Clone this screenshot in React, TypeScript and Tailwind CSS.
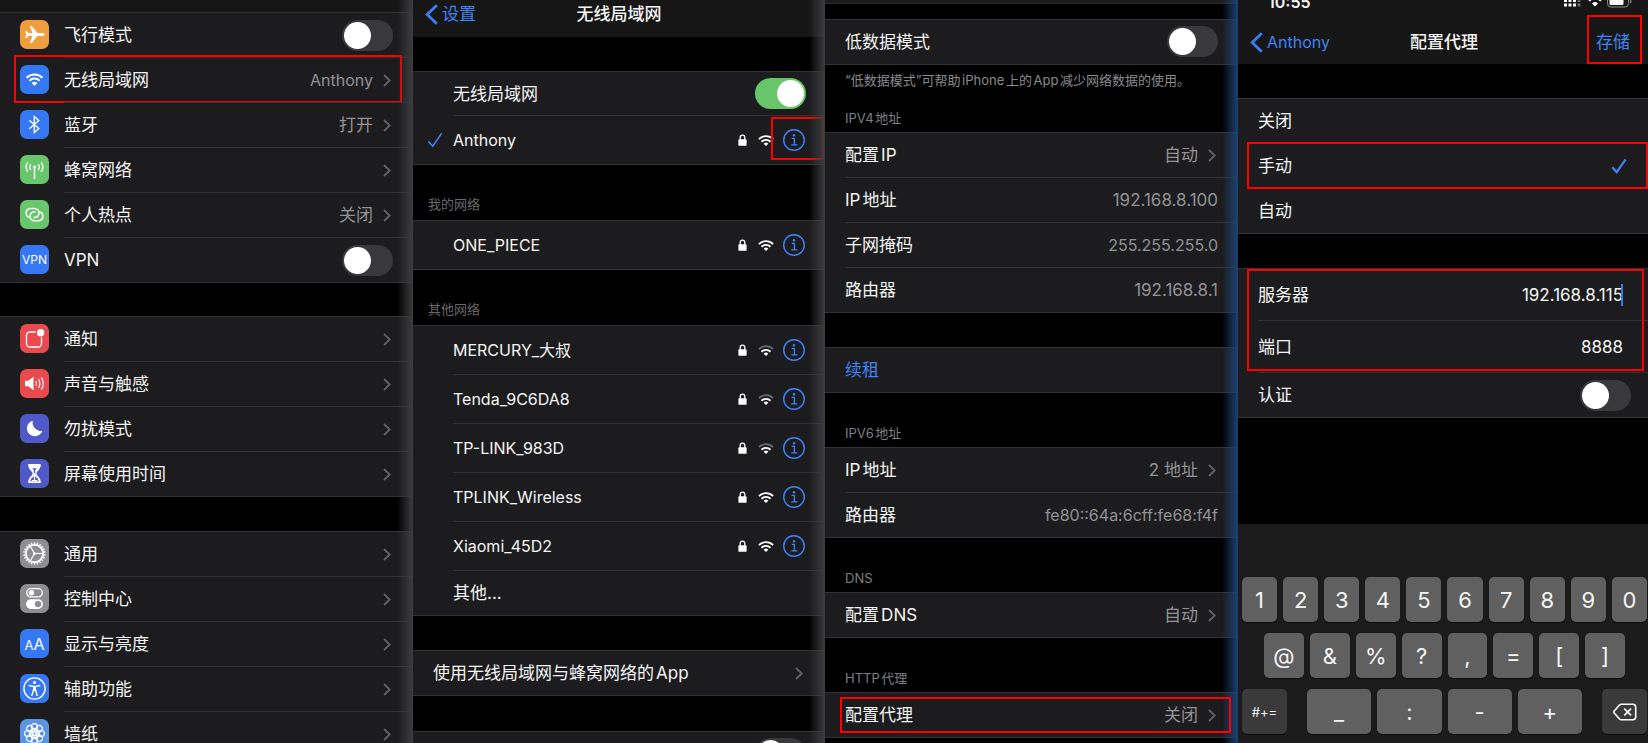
import React, { useState } from "react";

/* ---------- glyphs ---------- */

function Chevron() {
  return (
    <svg viewBox="0 0 8 13" className="h-[13px] w-2 shrink-0" fill="none" stroke="#626266" strokeWidth="1.8" aria-hidden="true">
      <path d="M1 1l5.7 5.5L1 12" />
    </svg>
  );
}

function BackArrow() {
  return (
    <svg viewBox="0 0 13 21" className="h-[21px] w-[13px] shrink-0" fill="none" stroke="#3b7ff7" strokeWidth="2.8" aria-hidden="true">
      <path d="M11.8 1.2L2.2 10.5l9.6 9.3" />
    </svg>
  );
}

function Lock() {
  return (
    <svg viewBox="0 0 9 12" className="h-3 w-[9px] shrink-0" aria-hidden="true">
      <path d="M2.2 6V3.4a2.3 2.3 0 0 1 4.6 0V6" fill="none" stroke="#fff" strokeWidth="1.3" />
      <rect x="0.4" y="5.3" width="8.2" height="6.5" rx="0.9" fill="#fff" />
    </svg>
  );
}

function Wifi({ weak = false }: { weak?: boolean }) {
  return (
    <svg viewBox="0 0 18 12.4" className="h-[11px] w-4 shrink-0" aria-hidden="true">
      <path d="M1 4.6a11.4 11.4 0 0 1 16 0" fill="none" stroke={weak ? "#6a6a6c" : "#fff"} strokeWidth="2" />
      <path d="M3.9 7.6a7.3 7.3 0 0 1 10.2 0" fill="none" stroke="#fff" strokeWidth="2" />
      <path d="M9 12.3L6.4 9.8a3.7 3.7 0 0 1 5.2 0z" fill="#fff" />
    </svg>
  );
}

function Info() {
  return (
    <svg viewBox="0 0 22 22" className="size-[22px]" fill="none" stroke="#3f83f8" strokeWidth="1.4" aria-hidden="true">
      <circle cx="11" cy="11" r="10.3" />
      <path d="M8.7 9.3h2.7v6.4M8.3 15.8h6" strokeWidth="1.3" />
      <circle cx="11" cy="6.2" r="1.2" fill="#3f83f8" stroke="none" />
    </svg>
  );
}

function Check({ bold = false }: { bold?: boolean }) {
  return (
    <svg viewBox="0 0 16 16" className="size-4 shrink-0" fill="none" stroke="#3f83f8" strokeWidth={bold ? 2.2 : 1.6} aria-hidden="true">
      <path d="M1.4 9.2l4.3 5L14.6 1.4" />
    </svg>
  );
}

const spokes = (n: number) => Array.from({ length: n }, (_, i) => (360 / n) * i);

const glyphs: Record<string, React.ReactNode> = {
  airplane: (
    <path
      fill="#fff"
      d="M24.7 14.5c0-.9-1.5-1.6-3.4-1.6h-3.9l-5-6.2c-.4-.5-.8-.7-1.3-.7H9.9l2.5 6.9H8.3L6.7 10.9H5.2l.9 3.6-.9 3.6h1.5l1.6-2h4.1L9.9 23h1.2c.5 0 .9-.2 1.3-.7l5-6.2h3.9c1.9 0 3.4-.7 3.4-1.6z"
    />
  ),
  wifi: (
    <g>
      <path d="M6.6 12.7a11.3 11.3 0 0 1 15.8 0M9.4 15.7a7.3 7.3 0 0 1 10.2 0" fill="none" stroke="#fff" strokeWidth="2" />
      <path d="M14.5 20.9l-2.9-2.8a4.1 4.1 0 0 1 5.8 0z" fill="#fff" />
    </g>
  ),
  bluetooth: <path d="M9.3 10.3l9.5 8.2-4.5 4V6.5l4.5 4-9.5 8.2" fill="none" stroke="#fff" strokeWidth="1.4" />,
  cellular: (
    <g fill="none" stroke="#fff" strokeWidth="1.3">
      <path d="M10.9 9.1a4.7 4.7 0 0 0 0 6M18.1 9.1a4.7 4.7 0 0 1 0 6M7.9 7.4a7.7 7.7 0 0 0 0 9.4M21.1 7.4a7.7 7.7 0 0 1 0 9.4" />
      <path d="M14.5 13v11" strokeWidth="1.5" />
      <circle cx="14.5" cy="12.1" r="1.7" fill="#fff" stroke="none" />
    </g>
  ),
  hotspot: (
    <g fill="none" stroke="#fff" strokeWidth="1.5">
      <path d="M10.4 17.4a4.5 4.5 0 0 1-.6-8.900h4.700a4.500 4.500 0 0 1 0 9h-1" />
      <path d="M18.600 11.800a4.500 4.500 0 0 1 .6 8.900h-4.700a4.500 4.500 0 0 1 0-9h1" />
    </g>
  ),
  notify: (
    <g>
      <rect x="6.5" y="8" width="15" height="15" rx="3.5" fill="none" stroke="#fff" strokeWidth="1.3" />
      <circle cx="20.6" cy="8.7" r="5" fill="#e84a4e" />
      <circle cx="20.6" cy="8.7" r="3.7" fill="#fff" />
    </g>
  ),
  sound: (
    <g>
      <path d="M5 11.7h3.3l5.2-3.9v13.4l-5.2-3.900H5z" fill="#fff" />
      <path d="M15.9 12.1q1.4 2.4 0 4.8M18.6 10.3q2.6 4.2 0 8.4M21.3 8.4q4 6.1 0 12.2" fill="none" stroke="#fff" strokeWidth="1.2" />
    </g>
  ),
  moon: <path d="M12.8 6.7a7.9 7.9 0 1 0 9.5 10.3A8.6 8.6 0 0 1 12.8 6.7z" fill="#fff" />,
  hourglass: (
    <g fill="#fff">
      <path d="M8.7 5h11.6q.7 0 .6.8l-.3 1.6c-.5 3-3.7 4.6-4.3 7.1.6 2.5 3.8 4.1 4.3 7.1l.3 1.6q.1.8-.6.8H8.7q-.7 0-.6-.8l.3-1.6c.5-3 3.7-4.6 4.3-7.1-.6-2.5-3.8-4.1-4.3-7.1l-.3-1.6Q8 5 8.7 5z" />
      <path d="M10.2 22.2q.7-3.4 3.6-4.7V11l-1.7-1.8h4.8L15.2 11v6.5q2.9 1.3 3.6 4.7z" fill="#5059c9" />
      <path d="M14.5 14v7M11.8 21.5h5.4" stroke="#fff" strokeWidth="1.2" />
    </g>
  ),
  gear: (
    <g fill="none" stroke="#fff">
      <circle cx="14.5" cy="14.5" r="8.6" strokeWidth="1.7" />
      {spokes(22).map((a) => (
        <path key={a} d="M14.5 3.3v2.8" strokeWidth="1.4" transform={`rotate(${a} 14.5 14.5)`} />
      ))}
      {spokes(3).map((a) => (
        <path key={a} d="M14.5 14.5h8" strokeWidth="1.2" transform={`rotate(${a} 14.5 14.5)`} />
      ))}
      <circle cx="14.5" cy="14.5" r="1.5" fill="#fff" stroke="none" />
    </g>
  ),
  control: (
    <g>
      <rect x="6.7" y="4.7" width="15.6" height="8.2" rx="4.1" fill="none" stroke="#fff" strokeWidth="1.3" />
      <circle cx="11.4" cy="8.8" r="2.7" fill="#fff" />
      <rect x="6" y="15.3" width="17" height="9.6" rx="4.8" fill="#fff" />
      <circle cx="18" cy="20.1" r="3.2" fill="#8e8e92" />
    </g>
  ),
  access: (
    <g fill="none" stroke="#fff">
      <circle cx="14.5" cy="14.5" r="10.6" strokeWidth="1.4" />
      <circle cx="14.5" cy="8.6" r="1.5" fill="#fff" stroke="none" />
      <path d="M8.7 11.5l4.6.9h2.4l4.6-.9" strokeWidth="1.3" />
      <path d="M14.5 12.3v4.5" strokeWidth="3" />
      <path d="M13.4 16l-1.7 6M15.6 16l1.7 6" strokeWidth="1.4" />
    </g>
  ),
  wallpaper: (
    <g fill="none" stroke="#fff" strokeWidth="1.1">
      {spokes(8).map((a) => (
        <circle key={a} cx="14.5" cy="7.6" r="3" transform={`rotate(${a} 14.5 14.5)`} />
      ))}
      {spokes(8).map((a) => (
        <circle key={a} cx="14.5" cy="11" r="1.8" transform={`rotate(${a + 22} 14.5 14.5)`} />
      ))}
      <circle cx="14.5" cy="14.5" r="1.7" />
    </g>
  ),
};

function Tile({ color, glyph }: { color: string; glyph: string }) {
  return (
    <span className={`flex size-[29px] shrink-0 items-center justify-center rounded-[7px] text-white ${color}`}>
      {glyph === "vpn" && <span className="text-xs leading-none">VPN</span>}
      {glyph === "aa" && (
        <span className="flex items-baseline leading-none">
          <span className="text-[13px] leading-none">A</span>
          <span className="text-base leading-none">A</span>
        </span>
      )}
      {glyphs[glyph] && (
        <svg viewBox="0 0 29 29" className="size-full" aria-hidden="true">
          {glyphs[glyph]}
        </svg>
      )}
    </span>
  );
}

/* ---------- building blocks ---------- */

function Toggle({ label, on = false }: { label: string; on?: boolean }) {
  return (
    <input
      type="checkbox"
      role="switch"
      aria-label={label}
      defaultChecked={on}
      className="h-[31px] w-[51px] shrink-0 appearance-none rounded-full bg-[#39393b] p-0.5 before:block before:size-[27px] before:rounded-full before:bg-white checked:bg-[#68c66a] checked:before:translate-x-5"
    />
  );
}

function Group({ children }: { children: React.ReactNode }) {
  return (
    <ul className="bg-[#1c1c1e] shadow-[inset_0_1px_0_#323234,0_1px_0_#323234] [&>li:first-child_.line]:border-transparent">
      {children}
    </ul>
  );
}

const lineBox = "line flex min-w-0 flex-1 items-center self-stretch border-t border-[#323234]";

type SettingItem = { label: string; value?: string; color: string; glyph: string; toggle?: boolean; marked?: boolean; latin?: boolean };

function SettingRow({ item }: { item: SettingItem }) {
  const inner = (
    <>
      <Tile color={item.color} glyph={item.glyph} />
      <span className={`${lineBox} ${item.toggle ? "pr-5" : "pr-[22px]"}`}>
        <span className="flex-1">{item.label}</span>
        {item.value && <span className={`mr-2.5 text-[#929297] ${item.latin ? "text-base" : ""}`}>{item.value}</span>}
        {item.toggle ? <Toggle label={item.label} /> : <Chevron />}
      </span>
    </>
  );
  const cls = "flex h-full items-center gap-[15px] pl-5";
  return (
    <li className="relative h-[45px]">
      {item.toggle ? <div className={cls}>{inner}</div> : <a href="#detail" className={cls}>{inner}</a>}
      {item.marked && <span className="pointer-events-none absolute -top-0.5 right-[11px] -bottom-px left-3.5 border-2 border-[#fe0000]" />}
    </li>
  );
}

function PlainRow({ label, value, chevron, small }: { label: string; value?: string; chevron?: boolean; small?: boolean }) {
  const inner = (
    <span className={`${lineBox} ${chevron ? "pr-[22px]" : "pr-5"}`}>
      <span className="flex-1">{label}</span>
      <span className={`text-[#929297] ${small ? "text-base" : ""}`}>{value}</span>
      {chevron && <span className="ml-2.5 flex"><Chevron /></span>}
    </span>
  );
  return (
    <li className="h-[45px]">
      {chevron ? <a href="#detail" className="flex h-full pl-5">{inner}</a> : <div className="flex h-full pl-5">{inner}</div>}
    </li>
  );
}

function Edge({ tint }: { tint: string }) {
  return <div className={`pointer-events-none absolute inset-y-0 right-0 w-4 bg-linear-to-r from-transparent ${tint}`} />;
}

/* ---------- screen 1: settings ---------- */

const first: SettingItem[] = [
  { label: "飞行模式", color: "bg-[#f09d3e]", glyph: "airplane", toggle: true },
  { label: "无线局域网", value: "Anthony", color: "bg-[#3478f6]", glyph: "wifi", marked: true, latin: true },
  { label: "蓝牙", value: "打开", color: "bg-[#3478f6]", glyph: "bluetooth" },
  { label: "蜂窝网络", color: "bg-[#68c66c]", glyph: "cellular" },
  { label: "个人热点", value: "关闭", color: "bg-[#68c66c]", glyph: "hotspot" },
  { label: "VPN", color: "bg-[#3478f6]", glyph: "vpn", toggle: true },
];
const second: SettingItem[] = [
  { label: "通知", color: "bg-[#e84a4e]", glyph: "notify" },
  { label: "声音与触感", color: "bg-[#e84a4e]", glyph: "sound" },
  { label: "勿扰模式", color: "bg-[#5059c9]", glyph: "moon" },
  { label: "屏幕使用时间", color: "bg-[#5059c9]", glyph: "hourglass" },
];
const third: SettingItem[] = [
  { label: "通用", color: "bg-[#8e8e92]", glyph: "gear" },
  { label: "控制中心", color: "bg-[#8e8e92]", glyph: "control" },
  { label: "显示与亮度", color: "bg-[#3478f6]", glyph: "aa" },
  { label: "辅助功能", color: "bg-[#3478f6]", glyph: "access" },
  { label: "墙纸", color: "bg-[#5a94e2]", glyph: "wallpaper" },
];

function SettingsScreen() {
  return (
    <section className="relative overflow-hidden bg-black">
      <div className="h-3 bg-[#161617]" />
      <Group>{first.map((i) => <SettingRow key={i.label} item={i} />)}</Group>
      <div className="h-[34px]" />
      <Group>{second.map((i) => <SettingRow key={i.label} item={i} />)}</Group>
      <div className="h-[35px]" />
      <Group>{third.map((i) => <SettingRow key={i.label} item={i} />)}</Group>
      <Edge tint="to-[#3d3d3f]" />
    </section>
  );
}

/* ---------- screen 2: wireless networks ---------- */

function NetworkRow({ name, weak, joined }: { name: string; weak?: boolean; joined?: boolean }) {
  return (
    <li className="relative flex h-[49px] items-center">
      <span className="flex w-10 shrink-0 pl-3.5">{joined && <Check />}</span>
      <span className={`${lineBox} pr-5`}>
        <span className="flex-1 text-base">{name}</span>
        <Lock />
        <span className="ml-[11px] flex"><Wifi weak={weak} /></span>
        <button type="button" aria-label={`${name} 详情`} className="ml-[9px]"><Info /></button>
      </span>
      {joined && <span className="pointer-events-none absolute top-0.5 right-px h-[43px] w-[53px] border-2 border-[#fe0000]" />}
    </li>
  );
}

const others = [
  { name: "MERCURY_大叔", weak: true },
  { name: "Tenda_9C6DA8", weak: true },
  { name: "TP-LINK_983D", weak: true },
  { name: "TPLINK_Wireless" },
  { name: "Xiaomi_45D2" },
];

const netHeading = "flex h-14 items-end px-[15px] pb-1.5 text-[13px] leading-5 text-[#68686c]";

function WirelessScreen() {
  return (
    <section className="relative overflow-hidden bg-black">
      <header className="grid h-[37px] grid-cols-[1fr_auto_1fr] bg-[#161617] px-3 pb-[9px]">
        <button type="button" className="flex items-center gap-1 text-[#3f83f8]"><BackArrow />设置</button>
        <h2 className="flex items-center font-medium">无线局域网</h2>
      </header>
      <div className="h-[34px]" />
      <Group>
        <li className="flex h-11 pl-10">
          <span className="line flex flex-1 items-center border-t pr-[19px]">
            <span className="flex-1">无线局域网</span>
            <Toggle label="无线局域网" on />
          </span>
        </li>
        <NetworkRow name="Anthony" joined />
      </Group>
      <h3 className={netHeading}>我的网络</h3>
      <Group><NetworkRow name="ONE_PIECE" /></Group>
      <h3 className={netHeading}>其他网络</h3>
      <Group>
        {others.map((o) => <NetworkRow key={o.name} {...o} />)}
        <li className="flex h-[45px] pl-10">
          <a href="#other" className={lineBox}>其他...</a>
        </li>
      </Group>
      <div className="h-[35px]" />
      <Group><PlainRow label="使用无线局域网与蜂窝网络的App" chevron /></Group>
      <div className="h-9" />
      <Group>
        <li className="flex h-[45px] items-center justify-end pr-[19px]"><Toggle label="询问是否加入网络" /></li>
      </Group>
      <Edge tint="to-[#3d3d3f]" />
    </section>
  );
}

/* ---------- screen 3: network details ---------- */

const detailHeading = "flex h-[55px] items-end px-5 pb-1 text-[13px] leading-5 text-[#7f7f84]";

function DetailScreen() {
  return (
    <section className="relative overflow-hidden bg-black">
      <div className="h-1 border-b border-[#2a2a2c] bg-[#1c1c1e]" />
      <div className="h-[15px]" />
      <Group>
        <li className="flex h-[45px] items-center pr-5 pl-5">
          <span className="flex-1">低数据模式</span>
          <Toggle label="低数据模式" />
        </li>
      </Group>
      <p className="h-[13px] px-5 pt-1.5 text-[13px] leading-5 whitespace-nowrap text-[#8a8a8f]">“低数据模式”可帮助iPhone上的App减少网络数据的使用。</p>
      <h3 className={detailHeading}>IPV4地址</h3>
      <Group>
        <PlainRow label="配置IP" value="自动" chevron />
        <PlainRow label="IP地址" value="192.168.8.100" />
        <PlainRow label="子网掩码" value="255.255.255.0" small />
        <PlainRow label="路由器" value="192.168.8.1" />
      </Group>
      <div className="h-[35px]" />
      <Group>
        <li className="flex h-[45px] pl-5">
          <button type="button" className="text-[#3f83f8]">续租</button>
        </li>
      </Group>
      <h3 className={detailHeading}>IPV6地址</h3>
      <Group>
        <PlainRow label="IP地址" value="2 地址" chevron />
        <PlainRow label="路由器" value="fe80::64a:6cff:fe68:f4f" small />
      </Group>
      <h3 className={detailHeading}>DNS</h3>
      <Group><PlainRow label="配置DNS" value="自动" chevron /></Group>
      <h3 className={detailHeading}>HTTP代理</h3>
      <div className="relative">
        <Group><PlainRow label="配置代理" value="关闭" chevron /></Group>
        <span className="pointer-events-none absolute top-[5px] right-[7px] bottom-1 left-[15px] z-10 border-2 border-[#fe0000]" />
      </div>
      <Edge tint="to-[#1c4273]" />
    </section>
  );
}

/* ---------- screen 4: proxy ---------- */

function StatusBar() {
  return (
    <div className="-mt-2 flex h-7 items-start justify-between pr-[15px] pl-[30px] text-base leading-5 font-semibold">
      <span>10:55</span>
      <svg viewBox="0 0 70 16" className="h-4 w-[70px]" aria-hidden="true">
        <g fill="#fff">
          <path d="M1 11.5h3v3H1zM5.5 11.5h3v3h-3zM10 11.5h3v3h-3zM1 7.5h3V10H1zM5.5 7.5h3V10h-3zM10 6h3v4h-3z" />
          <path d="M14.5 11.5h3v3h-3zM14.5 4h3v6h-3z" opacity=".35" />
          <path d="M32 14.5l-3-3a4.3 4.3 0 0 1 6 0zM26.7 9.5L25.2 8a9.600 9.600 0 0 1 13.600 0L37.300 9.500a7.500 7.500 0 0 0-10.600 0z" />
          <rect x="46.5" y="5" width="14" height="8" rx="1.5" />
          <path d="M67 7.5v4q1.5-.5 1.5-2t-1.5-2z" opacity=".5" />
        </g>
        <rect x="44.5" y="2.5" width="21" height="12.5" rx="3.5" fill="none" stroke="#8a8a8c" />
      </svg>
    </div>
  );
}

function Key({ label, className }: { label: string; className?: string }) {
  return (
    <button type="button" className={`h-[45px] min-w-0 rounded-[5px] shadow-[0_1px_0_#0c0c0c] ${className ?? "flex-1 bg-[#606060] text-[22px]"}`}>
      {label}
    </button>
  );
}

function Keyboard() {
  return (
    <div className="mt-auto flex flex-col gap-[11px] bg-[#1b1b1b] pt-[53px] pr-px pb-[9px] pl-1">
      <div className="flex gap-1.5">
        {[..."1234567890"].map((k) => <Key key={k} label={k} />)}
      </div>
      <div className="flex gap-1.5 px-[22px]">
        {[..."@&%?,=[]"].map((k) => <Key key={k} label={k} />)}
      </div>
      <div className="flex gap-5">
        <Key label="#+=" className="w-[45px] bg-[#3a3a3b] text-[13px]" />
        <div className="flex flex-1 gap-1.5">
          {[..."_:-+"].map((k) => <Key key={k} label={k} />)}
        </div>
        <button type="button" aria-label="删除" className="flex h-[45px] w-[45px] items-center justify-center rounded-[5px] bg-[#3a3a3b] shadow-[0_1px_0_#0c0c0c]">
          <svg viewBox="0 0 24 18" className="h-[18px] w-6" fill="none" stroke="#fff" strokeWidth="1.6" strokeLinejoin="round" aria-hidden="true">
            <path d="M8.3 1.2h11.4q3 0 3 3v9.6q0 3-3 3H8.3q-1 0-1.800-.8L1 9.800q-.6-.8 0-1.600L6.500 2q.8-.8 1.800-.8z" />
            <path d="M11.3 5.6l6.8 6.8M18.1 5.6l-6.8 6.8" />
          </svg>
        </button>
      </div>
    </div>
  );
}

const modes = ["关闭", "手动", "自动"];

function ProxyScreen() {
  const [mode, setMode] = useState("手动");
  const field = "min-w-0 flex-1 bg-transparent text-right outline-none";
  return (
    <section className="flex flex-col overflow-hidden bg-black">
      <div className="h-16 overflow-hidden bg-[#161617]">
        <StatusBar />
        <header className="grid h-11 grid-cols-[1fr_auto_1fr] items-center pr-2.5 pl-3">
          <button type="button" className="flex items-center gap-1 text-base text-[#3f83f8]"><BackArrow />Anthony</button>
          <h2 className="font-medium">配置代理</h2>
          <span className="relative mr-2 justify-self-end">
            <button type="button" className="text-[#3f83f8]">存储</button>
            <span className="pointer-events-none absolute -top-[15px] -right-3 -bottom-2.5 -left-[9px] border-2 border-[#fe0000]" />
          </span>
        </header>
      </div>
      <div className="h-[34px]" />
      <Group>
        {modes.map((m) => (
          <li key={m} className="relative h-[45px]">
            <label className="flex h-full pl-5">
              <input type="radio" name="mode" value={m} checked={mode === m} onChange={() => setMode(m)} className="sr-only" />
              <span className={`${lineBox} pr-[21px]`}>
                <span className="flex-1">{m}</span>
                {mode === m && <Check bold />}
              </span>
            </label>
            {m === "手动" && <span className="pointer-events-none absolute -top-px right-0 -bottom-px left-[9px] z-10 border-2 border-[#fe0000]" />}
          </li>
        ))}
      </Group>
      <div className="h-[35px]" />
      <div className="relative">
        <Group>
          <li className="flex h-[52px] pl-5">
            <span className={`${lineBox} pr-[25px]`}>
              <label htmlFor="server">服务器</label>
              <input id="server" defaultValue="192.168.8.115" className={field} />
              <span className="-ml-0.5 h-[22px] w-0.5 bg-[#3478f6]" />
            </span>
          </li>
          <li className="flex h-[52px] pl-5">
            <span className={`${lineBox} pr-[25px]`}>
              <label htmlFor="port">端口</label>
              <input id="port" defaultValue="8888" className={field} />
            </span>
          </li>
          <li className="flex h-[45px] pl-5">
            <span className={`${lineBox} pr-[17px]`}>
              <span className="flex-1">认证</span>
              <Toggle label="认证" />
            </span>
          </li>
        </Group>
        <span className="pointer-events-none absolute top-px right-1 left-[9px] h-[102px] border-2 border-[#fe0000]" />
      </div>
      <Keyboard />
    </section>
  );
}

export default function App() {
  return (
    <main className="grid h-screen grid-cols-[413fr_412fr_413fr_410fr] overflow-hidden bg-black font-['Inter','Noto_Sans_CJK_SC',sans-serif] text-[17px] leading-6 text-[#f5f5f5] [text-autospace:normal]">
      <SettingsScreen />
      <WirelessScreen />
      <DetailScreen />
      <ProxyScreen />
    </main>
  );
}
